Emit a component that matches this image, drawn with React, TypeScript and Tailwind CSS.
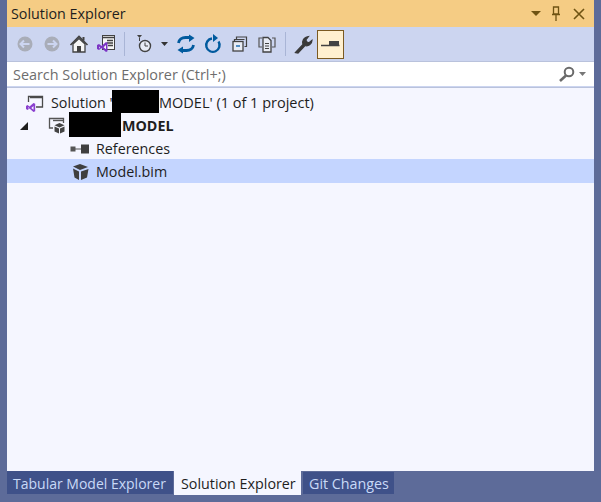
import React from 'react';

const font = "font-['Open_Sans',sans-serif]";

function ToolIcon({ w = 20, children }: { w?: number; children: React.ReactNode }) {
  return (
    <svg width={w} height="20" viewBox={`0 0 ${w} 20`} className="shrink-0">
      {children}
    </svg>
  );
}

function Sep() {
  return <div className="w-px h-6 bg-[#a9b5d6] shrink-0" />;
}

function Toolbar() {
  return (
    <div className="h-[34px] bg-[#ccd5f0] flex items-center pl-1 pr-2">
      <div className="w-[27px] flex justify-center">
        <ToolIcon>
          <circle cx="10" cy="10" r="7.5" fill="#a9adb8" />
          <path d="M5.5 10h9M9 6.5 5.5 10 9 13.5" stroke="#ccd5f0" strokeWidth="2" fill="none" />
        </ToolIcon>
      </div>
      <div className="w-[27px] flex justify-center">
        <ToolIcon>
          <circle cx="10" cy="10" r="7.5" fill="#a9adb8" />
          <path d="M5.5 10h9M11 6.5l3.5 3.5-3.5 3.5" stroke="#ccd5f0" strokeWidth="2" fill="none" />
        </ToolIcon>
      </div>
      <div className="w-[27px] flex justify-center">
        <ToolIcon>
          <path d="M1.5 11 10 2.500 18.500 11" stroke="#424242" strokeWidth="1.6" fill="none" />
          <path d="M13.500 3v3.500h2V3Z" fill="#424242" />
          <path d="M4 10v8h12v-8L10 4.500Z" fill="#f6f6f6" stroke="#424242" strokeWidth="1.300" />
          <rect x="8" y="12" width="4" height="6" fill="#424242" />
        </ToolIcon>
      </div>
      <div className="w-[27px] flex justify-center">
        <ToolIcon w={20}>
          <rect x="6.500" y="1.500" width="12" height="14" fill="#f6f6f6" stroke="#424242" />
          <path d="M6.500 3.500h12M11 6.500h6M11 9h6M12 11.500h5" stroke="#424242" strokeWidth="1.300" />
          <path d="M1 11 3 10l2.500 2L10 8l1.500.8v8.400L10 18l-4.500-4-2.500 2-2-1Zm2 1.500v2.200l1.200-1.100Zm7-1.600L7.600 13.300l2.400 1.900Z" fill="#7c35c5" />
        </ToolIcon>
      </div>
      <div className="ml-[5px] mr-[9px]"><Sep /></div>
      <ToolIcon w={20}>
        <path d="M3 1h5L5.500 4Z" fill="#424242" />
        <path d="M5.500 4v3" stroke="#424242" />
        <circle cx="11" cy="12" r="5.500" fill="#e9ecf5" stroke="#424242" strokeWidth="1.400" />
        <path d="M11 8.500V12h3" stroke="#424242" fill="none" />
      </ToolIcon>
      <svg width="8" height="4" viewBox="0 0 8 4" className="ml-[7px] mr-[3px] shrink-0"><path d="M0 0h7L3.500 4Z" fill="#333" /></svg>
      <div className="w-[27px] flex justify-center">
        <ToolIcon>
          <path d="M2.500 9C3 5.500 6 3.500 9.500 3.500H14" stroke="#005a9e" strokeWidth="2.800" fill="none" />
          <path d="M13 .5 18.500 4 13 8Z" fill="#005a9e" />
          <path d="M17.500 11c-.5 3.500-3.500 5.500-7 5.500H6" stroke="#005a9e" strokeWidth="2.800" fill="none" />
          <path d="M7 12.500 1.500 16 7 19.500Z" fill="#005a9e" />
        </ToolIcon>
      </div>
      <div className="w-[27px] flex justify-center">
        <ToolIcon>
          <path d="M9 4.500a6.700 6.700 0 1 0 6.500 3" stroke="#005a9e" strokeWidth="2.400" fill="none" />
          <path d="M10 0v8l5-4Z" fill="#005a9e" />
        </ToolIcon>
      </div>
      <div className="w-[27px] flex justify-center">
        <ToolIcon>
          <path d="M6.500 5.500V3h10v9.500h-2M4.500 7.500V5.500h10" stroke="#424242" strokeWidth="1.200" fill="none" />
          <rect x="3" y="7.500" width="10" height="9.500" fill="#e9ecf5" stroke="#424242" strokeWidth="1.300" />
          <path d="M6 12h4" stroke="#1f6fb5" strokeWidth="1.500" />
        </ToolIcon>
      </div>
      <div className="w-[27px] flex justify-center">
        <ToolIcon>
          <path d="M5 13H2V4h3M15 4h3v9h-3" stroke="#555" strokeWidth="1.200" fill="none" />
          <path d="M6 3.500h5l3 3V18H6Z" fill="#e9ecf5" stroke="#424242" strokeWidth="1.300" />
          <path d="M8 9.500h4M8 12h4M8 14.500h4" stroke="#424242" />
        </ToolIcon>
      </div>
      <div className="ml-[5px] mr-[7px]"><Sep /></div>
      <ToolIcon w={20}>
        <path d="M2.500 18.500 10 10.500C9 7 10.500 3 15.500 2.500L12.800 6l1.200 2 2 .8 3-2.500C19 10.500 15 12.500 12 11.500L5 19Z" fill="#3a3a3a" stroke="#3a3a3a" strokeWidth="1.200" />
      </ToolIcon>
      <div className="ml-1 w-[27px] h-[29px] bg-[#fff0d0] border border-[#7b5a22] flex items-center justify-center">
        <svg width="19" height="8" viewBox="0 0 19 8"><path d="M0 5.500h18.500" stroke="#424242" strokeWidth="1.500" /><rect x="8" y="1" width="10" height="4.500" fill="#424242" /></svg>
      </div>
    </div>
  );
}

function SearchBar() {
  return (
    <div className="h-[27px] bg-[#ccd5f0] border-y border-[#b9c2dc] flex">
      <div className="flex-1 bg-white border-b border-[#ccd5f0] flex items-center pl-[6px] pr-2">
        <span className="text-[14.4px] text-[#6d6d6d] flex-1 pt-px">Search Solution Explorer (Ctrl+;)</span>
        <svg width="17" height="17" viewBox="0 0 17 17" className="shrink-0">
          <circle cx="11" cy="6" r="4.300" fill="none" stroke="#6a6a6a" strokeWidth="2" />
          <path d="M8 9.500 2 15" stroke="#6a6a6a" strokeWidth="2.600" />
        </svg>
        <svg width="7" height="4" viewBox="0 0 7 4" className="ml-[4px] shrink-0"><path d="M0 0h7L3.500 4Z" fill="#777" /></svg>
      </div>
    </div>
  );
}

function Tree() {
  return (
    <div className="flex-1 bg-[#f5f6ff] pt-[3px] relative text-[14.3px] text-[#1e1e1e]">
      <div className="h-[23px] flex items-center pl-[18px]">
        <svg width="19" height="18" viewBox="0 0 19 18" className="shrink-0">
          <path d="M3.500 8V2.500h14V13H11" fill="none" stroke="#4a4a4a" strokeWidth="1.300" />
          <path d="M5 3.500h12" stroke="#4a4a4a" strokeWidth="1.500" />
          <path d="M1 12 2.500 11l2 1.600L8.500 9l1.700.8v7.400l-1.700.8-4-3.600-2 1.600L1 15Zm2 1v1.800l.9-.9Zm5.500-.9-2.200 1.800 2.200 1.800Z" fill="#8a3fcf" />
        </svg>
        <span className="ml-[7px] w-[108px] whitespace-pre shrink-0">Solution '</span>
        <span className="whitespace-pre text-[14.5px]">MODEL' (1 of 1 project)</span>
      </div>
      <div className="h-[23px] flex items-center pl-[13px]">
        <svg width="8" height="8" viewBox="0 0 8 8" className="shrink-0"><path d="M8 0v8H0Z" fill="#1e1e1e" /></svg>
        <svg width="20" height="18" viewBox="0 0 20 18" className="ml-[20px] shrink-0">
          <path d="M5 11H1.500V1.500h14V6" fill="none" stroke="#555" strokeWidth="1.300" />
          <path d="M5 3.500h10" stroke="#555" strokeWidth="1.400" />
          <path d="m11.500 6 5 2.300-5 2.300-5-2.300Z" fill="#444" />
          <path d="M6.500 9.500l4.500 2v5l-4.500-2ZM16.500 9.500l-4.500 2v5l4.500-2Z" fill="#444" />
        </svg>
        <span className="ml-[54px] font-bold whitespace-pre">MODEL</span>
      </div>
      <div className="h-[23px] flex items-center pl-[63px]">
        <svg width="19" height="10" viewBox="0 0 19 10" className="shrink-0">
          <rect x="0.500" y="2.500" width="5" height="5" fill="#555" />
          <path d="M5 5h6" stroke="#555" />
          <rect x="11" y="0.500" width="8" height="9" fill="#3f3f3f" />
        </svg>
        <span className="ml-[7px]">References</span>
      </div>
      <div className="h-[24px] -mt-px pt-px flex items-center pl-[65px] bg-[#c4d5ff]">
        <svg width="18" height="18" viewBox="0 0 18 18" className="shrink-0">
          <path d="M8 1 16 4 8 7 1 3.500Z" fill="#3f3f3f" />
          <path d="M1 5.500 7 8.500V17L2.500 14.500ZM9 8.500 16.500 6 15 14.500 9 17Z" fill="#3f3f3f" />
        </svg>
        <span className="ml-[6px]">Model.bim</span>
      </div>
      <div className="absolute left-[105px] top-[2px] w-[47px] h-[23px] bg-black" />
      <div className="absolute left-[62px] top-[24px] w-[52px] h-[25px] bg-black" />
    </div>
  );
}

function Tabs() {
  return (
    <div className="h-[31px] flex text-[14.3px] shrink-0">
      <div className="w-[166px] h-[23px] pl-[6px] pt-px flex items-center bg-[#3f5189] text-[#c9d9f7] text-[14px]">Tabular Model Explorer</div>
      <div className="ml-px w-[127px] h-[24px] pl-[7px] pt-px flex items-center bg-[#f5f6ff] text-[#1e1e1e]">Solution Explorer</div>
      <div className="ml-[2px] w-[91px] h-[22px] mt-px pl-[6px] pt-px flex items-center bg-[#3f5189] text-[#c9d9f7]">Git Changes</div>
    </div>
  );
}

export default function App() {
  return (
    <div className={`${font} w-[601px] h-[502px] bg-[#5d6b99] px-[7px] flex flex-col overflow-hidden`}>
      <div className="h-[27px] bg-[#f5cc84] flex items-center pl-1 pr-[9px] shrink-0">
        <span className="text-[14.3px] text-[#1e1e1e] flex-1">Solution Explorer</span>
        <svg width="10" height="5" viewBox="0 0 10 5" className="shrink-0"><path d="M0 0h10L5 5Z" fill="#6f5313" /></svg>
        <svg width="10" height="15" viewBox="0 0 10 15" className="ml-[10px] shrink-0"><path d="M2.500 1h5v7h-5ZM1 8.500h8M5 8.500V15" stroke="#6f5313" strokeWidth="1.300" fill="none" /></svg>
        <svg width="12" height="12" viewBox="0 0 12 12" className="ml-[12px] shrink-0"><path d="m1 1 10 10M11 1 1 11" stroke="#6f5313" strokeWidth="1.600" /></svg>
      </div>
      <Toolbar />
      <SearchBar />
      <Tree />
      <Tabs />
    </div>
  );
}
